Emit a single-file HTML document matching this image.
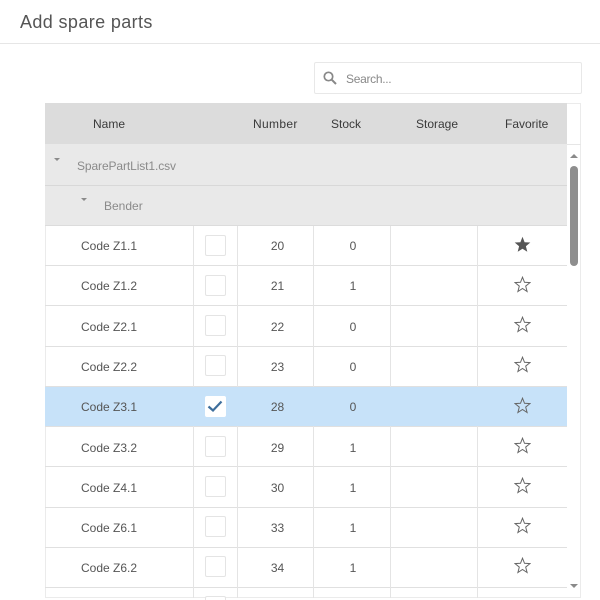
<!DOCTYPE html>
<html>
<head>
<meta charset="utf-8">
<style>
html,body{margin:0;padding:0;background:#fff;}
#p{position:relative;width:600px;height:600px;overflow:hidden;background:#fff;font-family:"Liberation Sans",sans-serif;font-size:12px;color:#555;filter:blur(.3px);}
#p div,#p span,#p svg{position:absolute;}
.t{white-space:nowrap;line-height:16px;}
.c{text-align:center;}
.h{color:#3a3a3a;top:116px;}
.line{background:#e0e0e0;height:1px;}
.vl{background:#e4e4e4;width:1px;}
.cb{width:19px;height:19px;border:1px solid #e4e4e4;border-radius:2px;background:#fff;box-sizing:content-box;}
</style>
</head>
<body>
<div id="p">
<div class="t" style="left:20px;top:11px;font-size:18px;line-height:22px;color:#555;letter-spacing:.38px;">Add spare parts</div>
<div style="left:0;top:43px;width:600px;height:1px;background:#e6e6e6;"></div>

<div style="left:314px;top:62px;width:266px;height:30px;border:1px solid #e8e8e8;border-radius:2px;background:#fff;"></div>
<svg style="left:322px;top:70px;" width="16" height="16" viewBox="0 0 16 16"><circle cx="6.5" cy="6.5" r="4.2" fill="none" stroke="#888" stroke-width="1.7"/><path d="M9.6 9.6L14 14" stroke="#888" stroke-width="2" fill="none"/></svg>
<div class="t" style="left:346px;top:71px;color:#888;letter-spacing:-.3px;">Search...</div>

<div style="left:45px;top:103px;width:536px;height:495px;border:1px solid #ebebeb;box-sizing:border-box;"></div>
<div style="left:45px;top:103px;width:522px;height:41px;background:#dcdcdc;"></div>
<div style="left:567px;top:144px;width:14px;height:1px;background:#e6e6e6;"></div>
<div style="left:45px;top:144px;width:522px;height:81px;background:#e9e9e9;"></div>
<div style="left:45px;top:185px;width:522px;height:1px;background:#d8d8d8;"></div>
<div style="left:45px;top:225px;width:522px;height:1px;background:#dcdcdc;"></div>

<div class="t h" style="left:93px;">Name</div>
<div class="t h" style="left:253px;letter-spacing:.35px;">Number</div>
<div class="t h" style="left:331px;">Stock</div>
<div class="t h" style="left:416px;">Storage</div>
<div class="t h" style="left:505px;">Favorite</div>

<div style="left:54px;top:158px;width:0;height:0;border-left:3.5px solid transparent;border-right:3.5px solid transparent;border-top:3px solid #8a8a8a;"></div>
<div class="t" style="left:77px;top:158px;color:#8a8a8a;letter-spacing:-.1px;">SparePartList1.csv</div>
<div style="left:81px;top:198px;width:0;height:0;border-left:3.5px solid transparent;border-right:3.5px solid transparent;border-top:3px solid #8a8a8a;"></div>
<div class="t" style="left:104px;top:198px;color:#8a8a8a;">Bender</div>

<!-- row lines -->
<div class="line" style="left:45px;top:265px;width:522px;"></div>
<div class="line" style="left:45px;top:305px;width:522px;"></div>
<div class="line" style="left:45px;top:346px;width:522px;"></div>
<div class="line" style="left:45px;top:386px;width:522px;"></div>
<div class="line" style="left:45px;top:426px;width:522px;"></div>
<div class="line" style="left:45px;top:466px;width:522px;"></div>
<div class="line" style="left:45px;top:507px;width:522px;"></div>
<div class="line" style="left:45px;top:547px;width:522px;"></div>
<div class="line" style="left:45px;top:587px;width:522px;"></div>

<!-- column lines -->
<div class="vl" style="left:193px;top:226px;height:372px;"></div>
<div class="vl" style="left:237px;top:226px;height:372px;"></div>
<div class="vl" style="left:313px;top:226px;height:372px;"></div>
<div class="vl" style="left:390px;top:226px;height:372px;"></div>
<div class="vl" style="left:477px;top:226px;height:372px;"></div>

<!-- selected row -->
<div style="left:45px;top:387px;width:522px;height:39px;background:#c7e2f9;"></div>

<!-- names -->
<div class="t" style="left:81px;top:238px;">Code Z1.1</div>
<div class="t" style="left:81px;top:278px;">Code Z1.2</div>
<div class="t" style="left:81px;top:319px;">Code Z2.1</div>
<div class="t" style="left:81px;top:359px;">Code Z2.2</div>
<div class="t" style="left:81px;top:399px;">Code Z3.1</div>
<div class="t" style="left:81px;top:440px;">Code Z3.2</div>
<div class="t" style="left:81px;top:480px;">Code Z4.1</div>
<div class="t" style="left:81px;top:520px;">Code Z6.1</div>
<div class="t" style="left:81px;top:560px;">Code Z6.2</div>

<!-- checkboxes -->
<div class="cb" style="left:205px;top:235px;"></div>
<div class="cb" style="left:205px;top:275px;"></div>
<div class="cb" style="left:205px;top:315px;"></div>
<div class="cb" style="left:205px;top:355px;"></div>
<div class="cb" style="left:205px;top:396px;border-color:#fff;"></div>
<svg style="left:205px;top:396px;" width="20" height="20" viewBox="0 0 20 20"><path d="M3.5 10.5L8 14.5L16.5 5.5" fill="none" stroke="#3d6e9c" stroke-width="2.2"/></svg>
<div class="cb" style="left:205px;top:436px;"></div>
<div class="cb" style="left:205px;top:476px;"></div>
<div class="cb" style="left:205px;top:516px;"></div>
<div class="cb" style="left:205px;top:556px;"></div>
<div class="cb" style="left:205px;top:596px;"></div>

<!-- numbers -->
<div class="t c" style="left:240px;width:75px;top:238px;">20</div>
<div class="t c" style="left:240px;width:75px;top:278px;">21</div>
<div class="t c" style="left:240px;width:75px;top:319px;">22</div>
<div class="t c" style="left:240px;width:75px;top:359px;">23</div>
<div class="t c" style="left:240px;width:75px;top:399px;">28</div>
<div class="t c" style="left:240px;width:75px;top:440px;">29</div>
<div class="t c" style="left:240px;width:75px;top:480px;">30</div>
<div class="t c" style="left:240px;width:75px;top:520px;">33</div>
<div class="t c" style="left:240px;width:75px;top:560px;">34</div>

<!-- stock -->
<div class="t c" style="left:315px;width:76px;top:238px;">0</div>
<div class="t c" style="left:315px;width:76px;top:278px;">1</div>
<div class="t c" style="left:315px;width:76px;top:319px;">0</div>
<div class="t c" style="left:315px;width:76px;top:359px;">0</div>
<div class="t c" style="left:315px;width:76px;top:399px;">0</div>
<div class="t c" style="left:315px;width:76px;top:440px;">1</div>
<div class="t c" style="left:315px;width:76px;top:480px;">1</div>
<div class="t c" style="left:315px;width:76px;top:520px;">1</div>
<div class="t c" style="left:315px;width:76px;top:560px;">1</div>

<!-- stars -->
<svg style="left:514px;top:236px;" width="17" height="17" viewBox="0 0 17 17"><path d="M8.5 .8L10.6 6.2L16.3 6.5L11.9 10.2L13.3 15.8L8.5 12.7L3.7 15.8L5.1 10.2L.7 6.5L6.4 6.2Z" fill="#555"/></svg>
<svg style="left:514px;top:276px;" width="17" height="17" viewBox="0 0 17 17"><path d="M8.5 1.2L10.5 6.3L16 6.6L11.7 10.1L13.1 15.5L8.5 12.5L3.9 15.5L5.3 10.1L1 6.6L6.5 6.3Z" fill="none" stroke="#666" stroke-width="1"/></svg>
<svg style="left:514px;top:316px;" width="17" height="17" viewBox="0 0 17 17"><path d="M8.5 1.2L10.5 6.3L16 6.6L11.7 10.1L13.1 15.5L8.5 12.5L3.9 15.5L5.3 10.1L1 6.6L6.5 6.3Z" fill="none" stroke="#666" stroke-width="1"/></svg>
<svg style="left:514px;top:356px;" width="17" height="17" viewBox="0 0 17 17"><path d="M8.5 1.2L10.5 6.3L16 6.6L11.7 10.1L13.1 15.5L8.5 12.5L3.9 15.5L5.3 10.1L1 6.6L6.5 6.3Z" fill="none" stroke="#666" stroke-width="1"/></svg>
<svg style="left:514px;top:397px;" width="17" height="17" viewBox="0 0 17 17"><path d="M8.5 1.2L10.5 6.3L16 6.6L11.7 10.1L13.1 15.5L8.5 12.5L3.9 15.5L5.3 10.1L1 6.6L6.5 6.3Z" fill="none" stroke="#666" stroke-width="1"/></svg>
<svg style="left:514px;top:437px;" width="17" height="17" viewBox="0 0 17 17"><path d="M8.5 1.2L10.5 6.3L16 6.6L11.7 10.1L13.1 15.5L8.5 12.5L3.9 15.5L5.3 10.1L1 6.6L6.5 6.3Z" fill="none" stroke="#666" stroke-width="1"/></svg>
<svg style="left:514px;top:477px;" width="17" height="17" viewBox="0 0 17 17"><path d="M8.5 1.2L10.5 6.3L16 6.6L11.7 10.1L13.1 15.5L8.5 12.5L3.9 15.5L5.3 10.1L1 6.6L6.5 6.3Z" fill="none" stroke="#666" stroke-width="1"/></svg>
<svg style="left:514px;top:517px;" width="17" height="17" viewBox="0 0 17 17"><path d="M8.5 1.2L10.5 6.3L16 6.6L11.7 10.1L13.1 15.5L8.5 12.5L3.9 15.5L5.3 10.1L1 6.6L6.5 6.3Z" fill="none" stroke="#666" stroke-width="1"/></svg>
<svg style="left:514px;top:557px;" width="17" height="17" viewBox="0 0 17 17"><path d="M8.5 1.2L10.5 6.3L16 6.6L11.7 10.1L13.1 15.5L8.5 12.5L3.9 15.5L5.3 10.1L1 6.6L6.5 6.3Z" fill="none" stroke="#666" stroke-width="1"/></svg>

<!-- scrollbar -->
<div style="left:570px;top:154px;width:0;height:0;border-left:4px solid transparent;border-right:4px solid transparent;border-bottom:4px solid #8a8a8a;"></div>
<div style="left:570px;top:166px;width:8px;height:100px;background:#8e8e8e;border-radius:4px;"></div>
<div style="left:570px;top:584px;width:0;height:0;border-left:4px solid transparent;border-right:4px solid transparent;border-top:4px solid #8a8a8a;"></div>
</div>
</body>
</html>
